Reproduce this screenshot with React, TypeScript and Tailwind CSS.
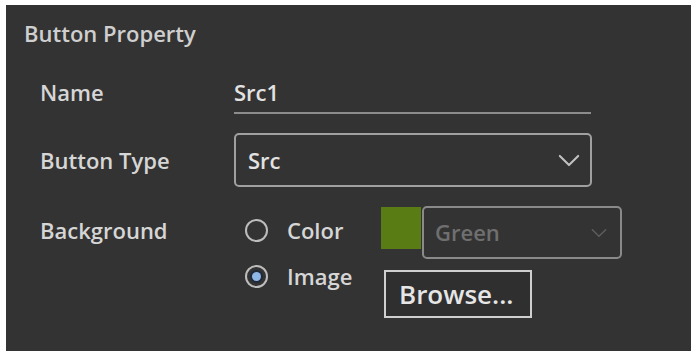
const font = { fontFamily: '"Open Sans", "Noto Sans", sans-serif' }

function Chevron({ w, color }: { w: number; color: string }) {
  return (
    <svg width={w} height={w / 2 + 2} viewBox="0 0 24 14" fill="none">
      <path d="M2 2 L12 12 L22 2" stroke={color} strokeWidth="2.2" strokeLinecap="round" strokeLinejoin="round" />
    </svg>
  )
}

function Radio({ checked, label }: { checked?: boolean; label: string }) {
  return (
    <div className="flex items-center h-[24px]">
      <span className="ml-[11px] w-[23px] h-[23px] rounded-full border-2 border-[#bdbdbd] flex items-center justify-center">
        {checked && <span className="w-[9px] h-[9px] rounded-full bg-[#8fb7e6] ring-2 ring-[#1f2a3a]" />}
      </span>
      <span className="ml-[19px] text-[22px] font-semibold text-[#d6d6d6] leading-none">{label}</span>
    </div>
  )
}

export default function App() {
  return (
    <div className="w-[693px] h-[351px] bg-white pt-[5px] pl-[6px] pr-[2px]" style={font}>
      <div className="h-full bg-[#333333] pl-[18px] pt-[13px]">
        <div className="h-[30px] text-[22px] font-semibold text-[#cfcfcf] leading-[30px]">Button Property</div>

        <div className="pl-[16px]">
          {/* Name */}
          <div className="flex mt-[24px]">
            <div className="w-[194px] h-[40px] flex items-center text-[22px] font-semibold text-[#d6d6d6]">Name</div>
            <div className="w-[357px] h-[42px] flex items-center border-b-2 border-[#8c8c8c] text-[22px] font-semibold text-[#e2e2e2]">
              Src1
            </div>
          </div>

          {/* Button Type */}
          <div className="flex items-center mt-[19px]">
            <div className="w-[194px] text-[22px] font-semibold text-[#d6d6d6]">Button Type</div>
            <div className="w-[358px] h-[54px] rounded-[5px] border-2 border-[#a0a0a0] flex items-center justify-between pl-[12px] pr-[10px]">
              <span className="text-[22px] font-semibold text-[#e2e2e2]">Src</span>
              <Chevron w={22} color="#c2c2c2" />
            </div>
          </div>

          {/* Background */}
          <div className="flex mt-[19px]">
            <div className="w-[194px] mt-[10px] h-[28px] leading-[28px] text-[22px] font-semibold text-[#d6d6d6]">Background</div>
            <div className="flex flex-col">
              <div className="flex items-start h-[53px]">
                <div className="w-[147px] mt-[12px]">
                  <Radio label="Color" />
                </div>
                <div className="w-[40px] h-[42px] mt-[1px] bg-[#5a7c14]" />
                <div className="ml-[1px] w-[200px] h-[53px] rounded-[5px] border-2 border-[#8a8a8a] flex items-center justify-between pl-[11px] pr-[13px]">
                  <span className="text-[22px] font-semibold text-[#6f6f6f]">Green</span>
                  <Chevron w={16} color="#5e5e5e" />
                </div>
              </div>
              <div className="flex items-start mt-[5px]">
                <div className="w-[150px]">
                  <Radio checked label="Image" />
                </div>
                <button className="mt-[6px] w-[148px] h-[48px] border-2 border-[#cfcfcf] bg-[#2f2f2f] flex items-center pl-[13px] text-[26px] font-semibold text-[#e6e6e6]">
                  Browse...
                </button>
              </div>
            </div>
          </div>
        </div>
      </div>
    </div>
  )
}
